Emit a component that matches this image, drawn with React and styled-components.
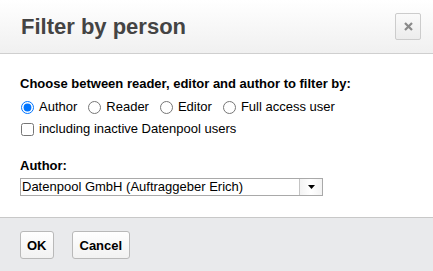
import React, { useState } from 'react';
import styled, { createGlobalStyle } from 'styled-components';

const Global = createGlobalStyle`
  html, body { margin: 0; padding: 0; background: #fff; }
  body { font-family: "Liberation Sans", Arial, sans-serif; color: #000; }
`;

const Dialog = styled.div`
  width: 433px;
  height: 271px;
  display: flex;
  flex-direction: column;
  background: #fff;
`;

const Header = styled.div`
  height: 54px;
  box-sizing: border-box;
  display: flex;
  align-items: center;
  justify-content: space-between;
  padding: 0 12px 0 21px;
  background: linear-gradient(#ffffff, #f0f0f0);
  border-bottom: 1px solid #cfcfcf;
  flex: none;
`;

const Title = styled.h1`
  margin: 0;
  font-size: 22px;
  font-weight: bold;
  color: #444;
`;

const CloseButton = styled.button`
  width: 26px;
  height: 27px;
  padding: 0;
  border: 1px solid #cccccc;
  border-radius: 2px;
  background: linear-gradient(#fafafa, #ececec);
  display: flex;
  align-items: center;
  justify-content: center;
`;

const Body = styled.div`
  flex: 1;
  padding: 22px 20px 0 20px;
  font-size: 13px;
`;

const Prompt = styled.div`
  font-weight: bold;
  line-height: 16px;
`;

const Row = styled.div`
  display: flex;
  align-items: center;
  height: 22px;
  margin-top: ${p => p.$top || 0}px;
`;

const Choice = styled.label`
  display: flex;
  align-items: center;
  margin-right: 10px;
  line-height: 16px;
  input {
    margin: 0 5px 0 1px;
    width: 13px;
    height: 13px;
  }
`;

const FieldLabel = styled.div`
  font-weight: bold;
  line-height: 16px;
  margin-top: 18px;
`;

const Select = styled.div`
  margin-top: 4px;
  width: 303px;
  height: 18px;
  box-sizing: border-box;
  border: 1px solid #a9a9a9;
  display: flex;
  align-items: stretch;
`;

const SelectValue = styled.div`
  flex: 1;
  padding-left: 1px;
  line-height: 16px;
  font-size: 13px;
`;

const SelectArrow = styled.div`
  width: 22px;
  border-left: 1px solid #c4c4c4;
  background: linear-gradient(90deg, #f3f3f3, #ffffff 50%, #f3f3f3);
  display: flex;
  align-items: center;
  justify-content: center;
`;

const Footer = styled.div`
  height: 52px;
  flex: none;
  border-top: 1px solid #c8c8c8;
  background: #e9eaec;
  display: flex;
  align-items: center;
  gap: 18px;
  padding: 1px 20px 0;
`;

const Button = styled.button`
  height: 28px;
  padding: 0 ${p => p.$px}px;
  font-family: "Liberation Sans", Arial, sans-serif;
  font-size: 13px;
  font-weight: bold;
  color: #000;
  border: 1px solid #b9b9b9;
  border-radius: 3px;
  background: linear-gradient(#ffffff, #f2f2f2);
`;

export default function App() {
  const [role, setRole] = useState('author');
  const roles = [
    ['author', 'Author'],
    ['reader', 'Reader'],
    ['editor', 'Editor'],
    ['full', 'Full access user'],
  ];
  return (
    <Dialog>
      <Global />
      <Header>
        <Title>Filter by person</Title>
        <CloseButton aria-label="close">
          <svg width="9" height="9" viewBox="0 0 9 9">
            <path d="M1 1 L8 8 M8 1 L1 8" stroke="#8a8a8a" strokeWidth="2.2" />
          </svg>
        </CloseButton>
      </Header>
      <Body>
        <Prompt>Choose between reader, editor and author to filter by:</Prompt>
        <Row $top={4}>
          {roles.map(([v, l]) => (
            <Choice key={v}>
              <input type="radio" name="role" checked={role === v} onChange={() => setRole(v)} />
              {l}
            </Choice>
          ))}
        </Row>
        <Row>
          <Choice>
            <input type="checkbox" />
            including inactive Datenpool users
          </Choice>
        </Row>
        <FieldLabel>Author:</FieldLabel>
        <Select>
          <SelectValue>Datenpool GmbH (Auftraggeber Erich)</SelectValue>
          <SelectArrow>
            <svg width="7" height="4" viewBox="0 0 7 4">
              <path d="M0 0 H7 L3.5 4 Z" fill="#000" />
            </svg>
          </SelectArrow>
        </Select>
      </Body>
      <Footer>
        <Button $px={6}>OK</Button>
        <Button $px={7}>Cancel</Button>
      </Footer>
    </Dialog>
  );
}
